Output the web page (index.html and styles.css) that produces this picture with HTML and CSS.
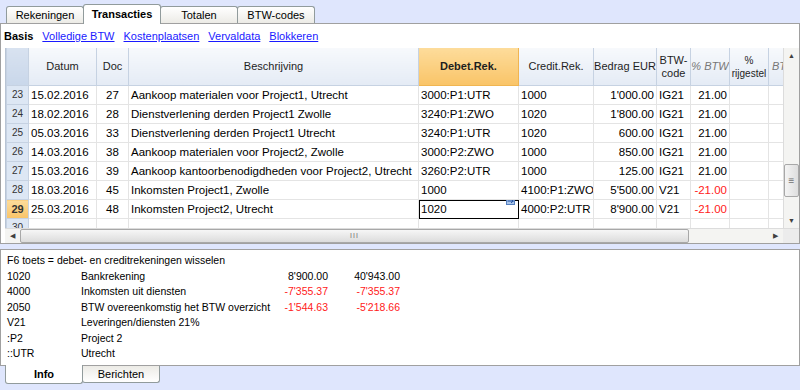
FILE: index.html
```html
<!DOCTYPE html>
<html lang="nl">
<head>
    <meta charset="UTF-8">
    <title>Transacties</title>
    <link rel="stylesheet" href="styles.css">
</head>
<body>
    <div class="tabs top-tabs">
        <div class="tab">Rekeningen</div>
        <div class="tab active">Transacties</div>
        <div class="tab">Totalen</div>
        <div class="tab">BTW-codes</div>
    </div>

    <div class="panel main-panel">
        <div class="views">
            <b>Basis</b>
            <a href="#">Volledige BTW</a>
            <a href="#">Kostenplaatsen</a>
            <a href="#">Vervaldata</a>
            <a href="#">Blokkeren</a>
        </div>

        <div class="grid">
            <div class="grid-body">
                <div class="table-wrap">
                    <table class="tx">
                        <colgroup>
                            <col class="c-nr"><col class="c-date"><col class="c-doc"><col class="c-desc">
                            <col class="c-deb"><col class="c-cred"><col class="c-amt"><col class="c-code">
                            <col class="c-pct"><col class="c-pct2"><col class="c-bt">
                        </colgroup>
                        <thead>
                            <tr>
                                <th class="nr"></th>
                                <th>Datum</th>
                                <th>Doc</th>
                                <th>Beschrijving</th>
                                <th class="hl">Debet.Rek.</th>
                                <th>Credit.Rek.</th>
                                <th>Bedrag EUR</th>
                                <th>BTW-<br>code</th>
                                <th class="muted">% BTW</th>
                                <th class="small">%<br>rijgestel</th>
                                <th class="muted left">BTW</th>
                            </tr>
                        </thead>
                        <tbody>
                            <tr>
                                <td class="nr">23</td><td>15.02.2016</td><td class="doc">27</td>
                                <td>Aankoop materialen voor Project1, Utrecht</td>
                                <td>3000:P1:UTR</td><td>1000</td><td class="num">1'000.00</td>
                                <td>IG21</td><td class="num">21.00</td><td></td><td></td>
                            </tr>
                            <tr>
                                <td class="nr">24</td><td>18.02.2016</td><td class="doc">28</td>
                                <td>Dienstverlening derden Project1 Zwolle</td>
                                <td>3240:P1:ZWO</td><td>1020</td><td class="num">1'800.00</td>
                                <td>IG21</td><td class="num">21.00</td><td></td><td></td>
                            </tr>
                            <tr>
                                <td class="nr">25</td><td>05.03.2016</td><td class="doc">33</td>
                                <td>Dienstverlening derden Project1 Utrecht</td>
                                <td>3240:P1:UTR</td><td>1020</td><td class="num">600.00</td>
                                <td>IG21</td><td class="num">21.00</td><td></td><td></td>
                            </tr>
                            <tr>
                                <td class="nr">26</td><td>14.03.2016</td><td class="doc">38</td>
                                <td>Aankoop materialen voor Project2, Zwolle</td>
                                <td>3000:P2:ZWO</td><td>1000</td><td class="num">850.00</td>
                                <td>IG21</td><td class="num">21.00</td><td></td><td></td>
                            </tr>
                            <tr>
                                <td class="nr">27</td><td>15.03.2016</td><td class="doc">39</td>
                                <td>Aankoop kantoorbenodigdheden voor Project2, Utrecht</td>
                                <td>3260:P2:UTR</td><td>1000</td><td class="num">125.00</td>
                                <td>IG21</td><td class="num">21.00</td><td></td><td></td>
                            </tr>
                            <tr>
                                <td class="nr">28</td><td>18.03.2016</td><td class="doc">45</td>
                                <td>Inkomsten Project1, Zwolle</td>
                                <td>1000</td><td>4100:P1:ZWO</td><td class="num">5'500.00</td>
                                <td>V21</td><td class="num neg">-21.00</td><td></td><td></td>
                            </tr>
                            <tr class="current">
                                <td class="nr">29</td><td>25.03.2016</td><td class="doc">48</td>
                                <td>Inkomsten Project2, Utrecht</td>
                                <td class="sel">1020
                                    <svg class="sel-icon" width="9" height="8" viewBox="0 0 9 8">
                                        <rect x="0.5" y="0.5" width="8" height="7" fill="#a8c4ea" stroke="#5580c0"/>
                                        <path d="M1.5 4h6M5 2.2l2.3 1.8L5 5.8" stroke="#1f4f9f" fill="none"/>
                                    </svg>
                                </td>
                                <td>4000:P2:UTR</td><td class="num">8'900.00</td>
                                <td>V21</td><td class="num neg">-21.00</td><td></td><td></td>
                            </tr>
                            <tr>
                                <td class="nr">30</td><td></td><td></td><td></td><td></td><td></td>
                                <td></td><td></td><td></td><td></td><td></td>
                            </tr>
                        </tbody>
                    </table>
                </div>
                <div class="vscroll">
                    <div class="arrow">&#9650;</div>
                    <div class="track v-track">
                        <div class="thumb v-thumb">&#8801;</div>
                    </div>
                    <div class="arrow">&#9660;</div>
                </div>
            </div>
            <div class="hscroll">
                <div class="arrow">&#9664;</div>
                <div class="track h-track">
                    <div class="thumb h-thumb">III</div>
                </div>
                <div class="arrow">&#9654;</div>
                <div class="corner"></div>
            </div>
        </div>
    </div>

    <div class="panel info-panel">
        <div class="info-title">F6 toets = debet- en creditrekeningen wisselen</div>
        <div class="info-grid">
            <span>1020</span><span>Bankrekening</span><span class="num">8'900.00</span><span class="num">40'943.00</span>
            <span>4000</span><span>Inkomsten uit diensten</span><span class="num neg">-7'355.37</span><span class="num neg">-7'355.37</span>
            <span>2050</span><span>BTW overeenkomstig het BTW overzicht</span><span class="num neg">-1'544.63</span><span class="num neg">-5'218.66</span>
            <span>V21</span><span>Leveringen/diensten 21%</span><span></span><span></span>
            <span>:P2</span><span>Project 2</span><span></span><span></span>
            <span>::UTR</span><span>Utrecht</span><span></span><span></span>
        </div>
    </div>

    <div class="tabs bottom-tabs">
        <div class="tab active">Info</div>
        <div class="tab">Berichten</div>
    </div>
</body>
</html>
```

FILE: styles.css
```css
body {
    margin: 0;
    width: 800px;
    height: 390px;
    overflow: hidden;
    background-color: #dfe6fd;
    font-family: "Liberation Sans", Tahoma, sans-serif;
    font-size: 11px;
    color: #000;
}

/* tabs */
.tabs {
    display: flex;
    padding-left: 6px;
}
.top-tabs {
    height: 23px;
    align-items: flex-end;
}
.tab {
    width: 76px;
    height: 16px;
    line-height: 16px;
    text-align: center;
    font-size: 11px;
    background: linear-gradient(#ffffff, #ecebe6);
    border: 1px solid #919b9c;
    border-radius: 3px 3px 0 0;
    margin-right: -1px;
}
.top-tabs .tab {
    border-bottom: none;
}
.top-tabs .tab.active {
    height: 19px;
    line-height: 19px;
    background: #fff;
    font-weight: bold;
    position: relative;
    z-index: 1;
    margin-bottom: -1px;
}

/* panels */
.panel {
    background: #fff;
    border: 1px solid #a0a0a0;
}
.main-panel {
    height: 219px;
    display: flex;
    flex-direction: column;
}
.views {
    height: 25px;
    display: flex;
    align-items: center;
    gap: 9px;
    padding-left: 3px;
    font-size: 11px;
}
.views a {
    color: #1a1aff;
}

/* grid */
.grid {
    margin-left: 4px;
}
.grid-body {
    display: flex;
    height: 180px;
}
.table-wrap {
    width: 778px;
    overflow: hidden;
    border-left: 1px solid #b8c4d4;
}
.tx {
    table-layout: fixed;
    border-collapse: collapse;
    width: 802px;
    font-family: "Liberation Sans", Arial, sans-serif;
    font-size: 11.5px;
}
.c-nr { width: 22px; }
.c-date { width: 68px; }
.c-doc { width: 32px; }
.c-desc { width: 290px; }
.c-deb { width: 100px; }
.c-cred { width: 75px; }
.c-amt { width: 63px; }
.c-code { width: 34px; }
.c-pct { width: 39px; }
.c-pct2 { width: 39px; }
.c-bt { width: 40px; }

.tx th {
    height: 37px;
    padding: 0;
    font-size: 11px;
    font-weight: normal;
    line-height: 13px;
    color: #1e1e1e;
    background: linear-gradient(#f7f9fc, #e4ebf5);
    border: 1px solid #c6d2e2;
    border-top: none;
    overflow: hidden;
    white-space: nowrap;
}
.tx th.small {
    font-size: 10px;
}
.tx th.left {
    text-align: left;
    padding-left: 3px;
}
.tx th.nr {
    background: linear-gradient(#d8e2f0, #c9d7ea);
}
.tx th.hl {
    font-weight: bold;
    background: linear-gradient(#fddc9b, #f9c468);
    border-color: #f0b552;
}
.tx th.muted {
    font-style: italic;
    color: #777;
}
.tx td {
    height: 18px;
    padding: 0 2px;
    border: 1px solid #e4e4e4;
    white-space: nowrap;
    overflow: hidden;
    line-height: 18px;
}
.tx td.nr {
    background: #dde7f4;
    font-size: 10px;
    text-align: center;
    color: #333;
    border-color: #c6d2e2;
    padding: 0;
}
.tx tr.current td.nr {
    background: linear-gradient(#fddc9b, #f9c468);
    font-weight: bold;
    font-size: 11px;
}
.tx td.doc {
    padding-left: 9px;
}
.tx td.num {
    text-align: right;
}
.neg {
    color: #ff2020;
}
.tx td.sel {
    position: relative;
    outline: 1px solid #000;
    outline-offset: -1px;
}
.sel-icon {
    position: absolute;
    right: 3px;
    top: -3px;
}

/* scrollbars */
.vscroll {
    width: 15px;
    display: flex;
    flex-direction: column;
    background: #f4f4f2;
    border-left: 1px solid #dcdcdc;
}
.arrow {
    width: 15px;
    height: 15px;
    font-size: 7px;
    line-height: 15px;
    text-align: center;
    color: #404040;
    flex: none;
}
.track {
    flex: 1;
    display: flex;
}
.v-track {
    flex-direction: column;
    justify-content: flex-end;
    padding-bottom: 16px;
}
.thumb {
    background: linear-gradient(90deg, #f4f4f4, #dedede);
    border: 1px solid #a8a8a8;
    border-radius: 2px;
    color: #707070;
    text-align: center;
}
.v-thumb {
    height: 31px;
    line-height: 31px;
    font-size: 10px;
}
.hscroll {
    height: 14px;
    display: flex;
    background: #f4f4f2;
    border-top: 1px solid #dcdcdc;
}
.hscroll .arrow {
    height: 14px;
    line-height: 14px;
}
.h-track {
    padding-right: 79px;
}
.h-thumb {
    flex: 1;
    background: linear-gradient(#f6f6f6, #dcdcdc);
    font-size: 7px;
    line-height: 12px;
    letter-spacing: 1px;
}
.corner {
    width: 16px;
    background: #ececec;
}

/* info */
.info-panel {
    margin-top: 5px;
    height: 110px;
    padding: 3px 6px 2px;
    font-size: 10.5px;
    line-height: 15.5px;
    white-space: nowrap;
    overflow: hidden;
}
.info-grid {
    display: grid;
    grid-template-columns: 74px 180px 67px 72px;
}
.info-grid .num {
    text-align: right;
}

.bottom-tabs {
    padding-left: 5px;
    align-items: flex-start;
}
.bottom-tabs .tab {
    border-top: none;
    border-radius: 0 0 3px 3px;
    background: linear-gradient(#ecebe6, #ffffff);
}
.bottom-tabs .tab.active {
    height: 18px;
    line-height: 18px;
    background: #fff;
    font-weight: bold;
    margin-top: -1px;
    position: relative;
    z-index: 1;
}
```
